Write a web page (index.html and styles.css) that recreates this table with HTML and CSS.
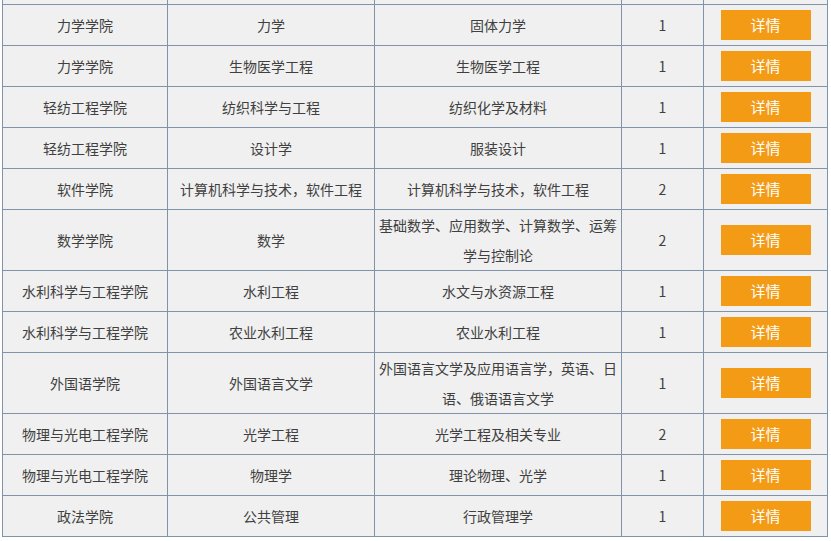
FILE: index.html
```html
<!DOCTYPE html>
<html lang="zh-CN">
<head>
<meta charset="utf-8">
<title>招聘岗位</title>
<link rel="stylesheet" href="styles.css">
</head>
<body>
<table class="jobs">
  <colgroup>
    <col class="c1"><col class="c2"><col class="c3"><col class="c4"><col class="c5">
  </colgroup>
  <tbody>
    <tr class="stub"><td></td><td></td><td></td><td></td><td></td></tr>
    <tr><td>力学学院</td><td>力学</td><td>固体力学</td><td>1</td><td><a class="btn" href="#">详情</a></td></tr>
    <tr><td>力学学院</td><td>生物医学工程</td><td>生物医学工程</td><td>1</td><td><a class="btn" href="#">详情</a></td></tr>
    <tr><td>轻纺工程学院</td><td>纺织科学与工程</td><td>纺织化学及材料</td><td>1</td><td><a class="btn" href="#">详情</a></td></tr>
    <tr><td>轻纺工程学院</td><td>设计学</td><td>服装设计</td><td>1</td><td><a class="btn" href="#">详情</a></td></tr>
    <tr><td>软件学院</td><td>计算机科学与技术，软件工程</td><td>计算机科学与技术，软件工程</td><td>2</td><td><a class="btn" href="#">详情</a></td></tr>
    <tr><td>数学学院</td><td>数学</td><td>基础数学、应用数学、计算数学、运筹学与控制论</td><td>2</td><td><a class="btn" href="#">详情</a></td></tr>
    <tr><td>水利科学与工程学院</td><td>水利工程</td><td>水文与水资源工程</td><td>1</td><td><a class="btn" href="#">详情</a></td></tr>
    <tr><td>水利科学与工程学院</td><td>农业水利工程</td><td>农业水利工程</td><td>1</td><td><a class="btn" href="#">详情</a></td></tr>
    <tr><td>外国语学院</td><td>外国语言文学</td><td>外国语言文学及应用语言学，英语、日语、俄语语言文学</td><td>1</td><td><a class="btn" href="#">详情</a></td></tr>
    <tr><td>物理与光电工程学院</td><td>光学工程</td><td>光学工程及相关专业</td><td>2</td><td><a class="btn" href="#">详情</a></td></tr>
    <tr><td>物理与光电工程学院</td><td>物理学</td><td>理论物理、光学</td><td>1</td><td><a class="btn" href="#">详情</a></td></tr>
    <tr><td>政法学院</td><td>公共管理</td><td>行政管理学</td><td>1</td><td><a class="btn" href="#">详情</a></td></tr>
  </tbody>
</table>
</body>
</html>
```
FILE: styles.css
```css
html, body {
  margin: 0;
  padding: 0;
  background: #ffffff;
}
body {
  font-family: "Noto Sans CJK SC", "Noto Sans", sans-serif;
  font-size: 14px;
  color: #404040;
  overflow: hidden;
}
.jobs {
  border-collapse: collapse;
  table-layout: fixed;
  width: 825px;
  margin: 0 0 0 2px;
  background: #f0f0f0;
}
.c1 { width: 165px; }
.c2 { width: 207px; }
.c3 { width: 247px; }
.c4 { width: 82px; }
.c5 { width: 124px; }
.jobs td {
  border: 1px solid #7f93ab;
  padding: 0 3px;
  height: 40px;
  line-height: 30px;
  text-align: center;
  vertical-align: middle;
}
.jobs .stub td {
  border-top: none;
  padding: 0;
  height: 4px;
  line-height: 0;
}
.btn {
  display: inline-block;
  width: 90px;
  height: 30px;
  line-height: 30px;
  background: #f39b15;
  color: #ffffff;
  font-size: 15px;
  text-decoration: none;
  vertical-align: top;
}
```
